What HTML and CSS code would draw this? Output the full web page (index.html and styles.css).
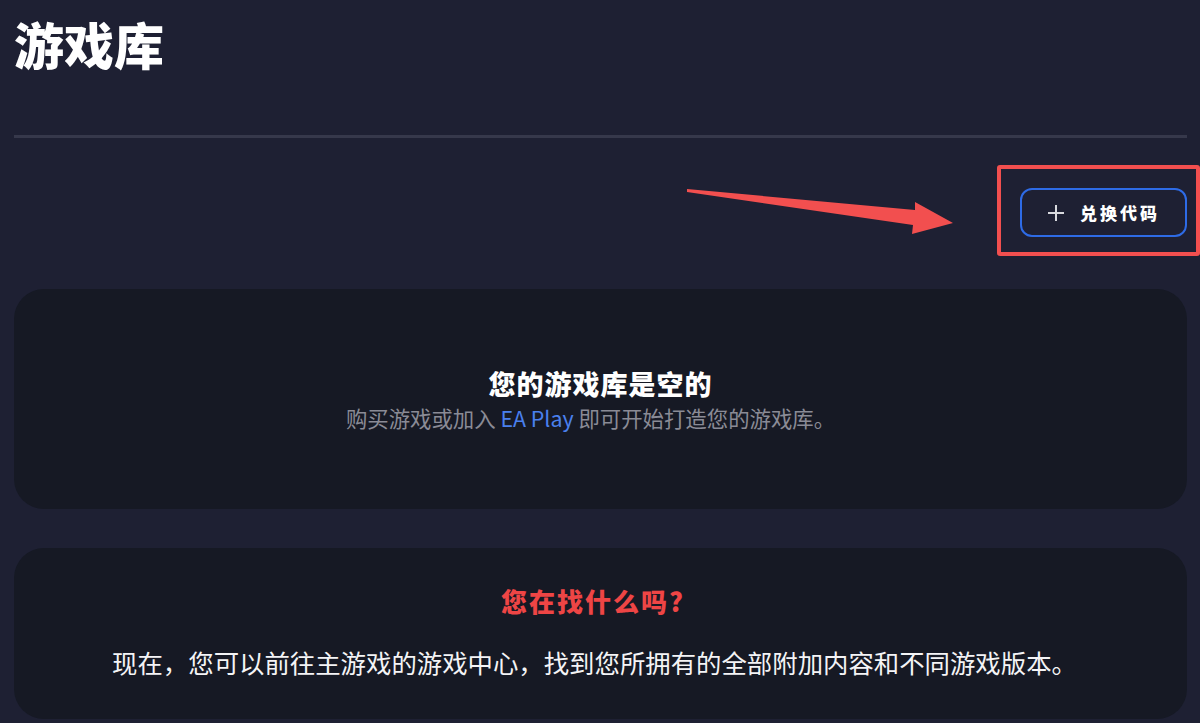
FILE: index.html
```html
<!DOCTYPE html>
<html lang="zh-CN">
<head>
    <meta charset="UTF-8">
    <meta name="viewport" content="width=device-width, initial-scale=1.0">
    <title>游戏库</title>
    <link rel="stylesheet" href="styles.css">
</head>
<body>
<h1 class="page-title">游戏库</h1>
<div class="divider"></div>

<div class="toolbar">
    <button class="redeem-btn" type="button">
        <svg class="plus-icon" width="18" height="18" viewBox="0 0 18 18">
            <path d="M9 1v16M1 9h16" stroke="#d8d9de" stroke-width="2" fill="none"/>
        </svg>
        <span>兑换代码</span>
    </button>

    <!-- annotation -->
    <div class="annot-box"></div>
    <svg class="annot-arrow" width="290" height="75" viewBox="680 170 290 75">
        <polygon points="687,190 915,211 915,203 953,224 912,235 913,226 687,193" fill="#f24f4f"/>
    </svg>
</div>

<div class="card empty-card">
    <h2 class="card-title">您的游戏库是空的</h2>
    <p class="card-sub">购买游戏或加入 <a href="#" class="link">EA Play</a> 即可开始打造您的游戏库。</p>
</div>

<div class="card help-card">
    <h2 class="help-title">您在找什么吗?</h2>
    <p class="help-text">现在，您可以前往主游戏的游戏中心，找到您所拥有的全部附加内容和不同游戏版本。</p>
</div>
</body>
</html>
```

FILE: styles.css
```css
body {
    margin: 0;
    padding: 0 13px 0 14px;
    background-color: #1e2033;
    color: #f2f2f4;
    font-family: "Noto Sans CJK SC", "Noto Sans", sans-serif;
    overflow: hidden;
}
.page-title {
    margin: 0;
    padding-top: 13px;
    font-size: 50px;
    line-height: 60px;
    font-weight: 900;
    color: #ffffff;
}
.divider {
    margin-top: 62px;
    height: 3px;
    background-color: #36384b;
}
.toolbar {
    position: relative;
    display: flex;
    justify-content: flex-end;
    margin-top: 50px;
}
.redeem-btn {
    display: flex;
    align-items: center;
    gap: 15px;
    height: 49px;
    width: 167px;
    box-sizing: border-box;
    padding: 0 0 0 25px;
    background: transparent;
    border: 2px solid #2e6be6;
    border-radius: 12px;
    color: #ffffff;
    font-family: inherit;
    font-size: 17px;
    font-weight: 900;
    letter-spacing: 3px;
    cursor: pointer;
}
.plus-icon {
    flex-shrink: 0;
}
.annot-box {
    position: absolute;
    top: -23px;
    right: -13px;
    width: 203px;
    height: 91px;
    box-sizing: border-box;
    border: 4px solid #f24f4f;
    border-radius: 3px;
}
.annot-arrow {
    position: absolute;
    left: 666px;
    top: -19px;
}
.card {
    background-color: #161924;
    border-radius: 30px;
    text-align: center;
}
.empty-card {
    margin-top: 52px;
    height: 220px;
    display: flex;
    flex-direction: column;
    justify-content: center;
    align-items: center;
}
.card-title {
    margin: 0;
    font-size: 27px;
    line-height: 38px;
    font-weight: 900;
    letter-spacing: 1px;
    color: #ffffff;
}
.card-sub {
    margin: 0 0 0 -20px;
    font-size: 21.4px;
    line-height: 30px;
    color: #8a8b96;
}
.link {
    color: #4a80ee;
    text-decoration: none;
}
.help-card {
    margin-top: 39px;
    height: 171px;
    padding-top: 35px;
    box-sizing: border-box;
}
.help-title {
    margin: 0 0 0 -15px;
    font-size: 26px;
    line-height: 36px;
    font-weight: 900;
    letter-spacing: 2px;
    color: #ee4545;
}
.help-text {
    margin: 25px 0 0 -12px;
    font-size: 25.4px;
    line-height: 36px;
    color: #f4f4f6;
}
```
